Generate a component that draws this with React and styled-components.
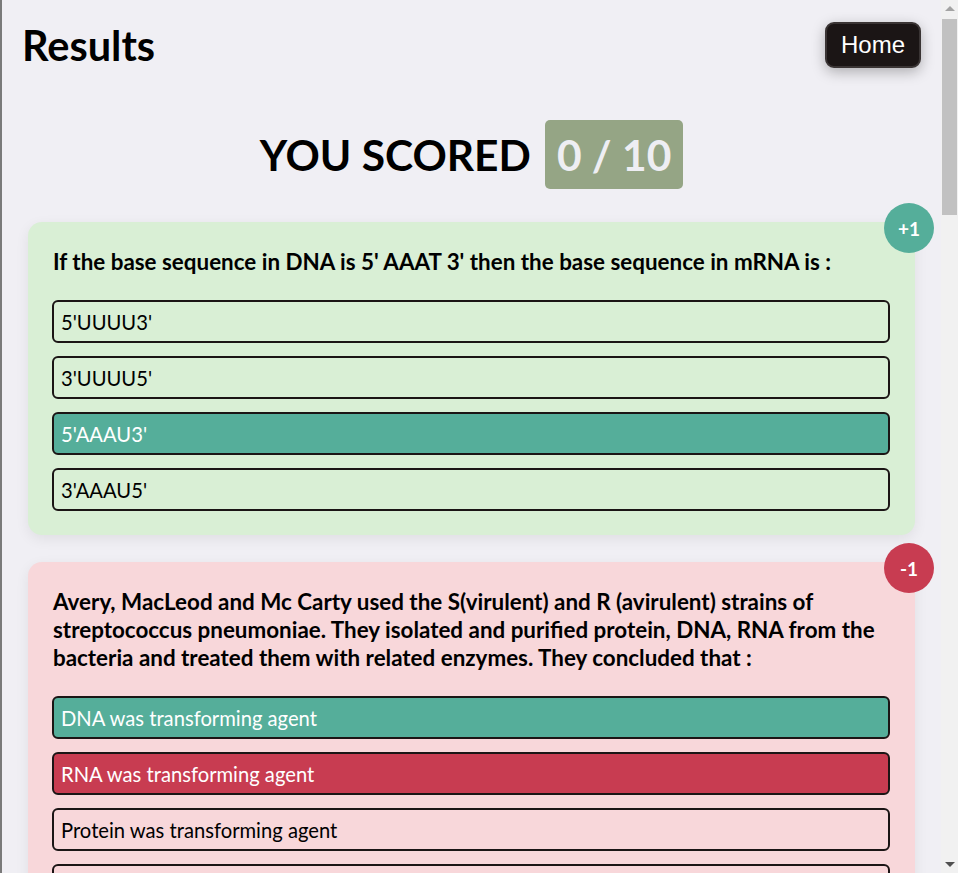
import React from "react";
import styled, { createGlobalStyle } from "styled-components";

const GlobalStyle = createGlobalStyle`
  html, body {
    margin: 0;
    padding: 0;
    background: #f0eff4;
  }
  body {
    font-family: Lato, "Noto Sans", sans-serif;
    color: #000;
    border-left: 2px solid #7a7a7a;
  }
  * { box-sizing: border-box; }
`;

const Page = styled.div`
  margin-right: 17px;
  padding: 20px 20px 40px 20px;
`;

const Scrollbar = styled.div`
  position: fixed;
  top: 0;
  right: 0;
  bottom: 0;
  width: 17px;
  background: #f1f1f1;
  display: flex;
  flex-direction: column;
  align-items: center;
`;

const Arrow = styled.div`
  width: 0;
  height: 0;
  margin: 6px 0;
  border-left: 5px solid transparent;
  border-right: 5px solid transparent;
  ${(p) =>
    p.$down
      ? "border-top: 5px solid #505050; margin-top: auto;"
      : "border-bottom: 5px solid #a3a3a3;"}
`;

const Thumb = styled.div`
  width: 15px;
  height: 196px;
  margin-top: 2px;
  background: #c1c1c1;
`;

const Header = styled.header`
  display: flex;
  align-items: center;
  justify-content: space-between;
`;

const Title = styled.h1`
  margin: 0;
  font-size: 41.5px;
  font-weight: 700;
  line-height: 50px;
`;

const HomeButton = styled.button`
  font-family: "Liberation Sans", Arial, sans-serif;
  font-size: 24px;
  color: #fff;
  background: #1b1515;
  border: 2px solid #3a3434;
  border-radius: 9px;
  padding: 7px 14px;
  box-shadow: 0 4px 14px rgba(0, 0, 0, 0.28);
  cursor: pointer;
`;

const ScoreRow = styled.div`
  display: flex;
  justify-content: center;
  align-items: center;
  gap: 14px;
  margin-top: 50px;
`;

const ScoreLabel = styled.span`
  font-size: 42.5px;
  font-weight: 700;
`;

const ScoreBox = styled.span`
  font-size: 42.5px;
  font-weight: 700;
  line-height: 53px;
  color: #eeeef3;
  background: #95a585;
  border-radius: 5px;
  padding: 8px 12px;
`;

const List = styled.div`
  display: flex;
  flex-direction: column;
  gap: 27px;
  margin: 33px 6px 0 6px;
`;

const Card = styled.section`
  position: relative;
  background: ${(p) => (p.$correct ? "#d9efd5" : "#f8d7da")};
  border-radius: 14px;
  padding: 26px 25px 24px 24px;
  box-shadow: 0 4px 14px rgba(0, 0, 0, 0.07);
`;

const Badge = styled.div`
  position: absolute;
  top: -19px;
  right: -19px;
  width: 50px;
  height: 50px;
  border-radius: 50%;
  display: flex;
  align-items: center;
  justify-content: center;
  background: ${(p) => (p.$correct ? "#55ae9a" : "#c83c51")};
  color: #fff;
  font-weight: 700;
  font-size: 19px;
`;

const Question = styled.p`
  margin: 0 0 24px 1px;
  font-size: 22.4px;
  font-weight: 700;
  line-height: 28px;
`;

const Options = styled.div`
  display: flex;
  flex-direction: column;
  gap: 13px;
`;

const optionBg = { correct: "#55ae9a", wrong: "#c83c51", none: "transparent" };

const Option = styled.div`
  height: 43px;
  display: flex;
  align-items: center;
  padding: 0 7px;
  border: 2px solid #1b1515;
  border-radius: 6px;
  font-size: 20.2px;
  background: ${(p) => optionBg[p.$state]};
  color: ${(p) => (p.$state === "none" ? "#000" : "#fff")};
`;

const questions = [
  {
    q: "If the base sequence in DNA is 5' AAAT 3' then the base sequence in mRNA is :",
    options: ["5'UUUU3'", "3'UUUU5'", "5'AAAU3'", "3'AAAU5'"],
    answer: 2,
    chosen: 2,
  },
  {
    q: "Avery, MacLeod and Mc Carty used the S(virulent) and R (avirulent) strains of streptococcus pneumoniae. They isolated and purified protein, DNA, RNA from the bacteria and treated them with related enzymes. They concluded that :",
    options: [
      "DNA was transforming agent",
      "RNA was transforming agent",
      "Protein was transforming agent",
      "All are correct",
    ],
    answer: 0,
    chosen: 1,
  },
  {
    q: "The process of copying genetic information from one strand of DNA into RNA is termed as :",
    options: ["Replication", "Transcription", "Translation", "Reverse transcription"],
    answer: 1,
    chosen: 0,
  },
  {
    q: "Which of the following is the initiator codon?",
    options: ["UAA", "UAG", "AUG", "UGA"],
    answer: 2,
    chosen: 0,
  },
  {
    q: "The unequivocal proof that DNA is the genetic material came from the experiments of :",
    options: ["Griffith", "Hershey and Chase", "Watson and Crick", "Meselson and Stahl"],
    answer: 1,
    chosen: 2,
  },
  {
    q: "Okazaki fragments are seen during :",
    options: ["Transcription", "Translation", "Replication", "Transduction"],
    answer: 2,
    chosen: 0,
  },
  {
    q: "The enzyme that joins the Okazaki fragments is :",
    options: ["DNA polymerase", "DNA ligase", "Helicase", "Primase"],
    answer: 1,
    chosen: 0,
  },
  {
    q: "The number of hydrogen bonds between guanine and cytosine is :",
    options: ["One", "Two", "Three", "Four"],
    answer: 2,
    chosen: 1,
  },
  {
    q: "Which RNA carries amino acids to the site of protein synthesis?",
    options: ["mRNA", "tRNA", "rRNA", "snRNA"],
    answer: 1,
    chosen: 0,
  },
  {
    q: "The lac operon consists of how many structural genes?",
    options: ["One", "Two", "Three", "Four"],
    answer: 2,
    chosen: 3,
  },
];

export default function App() {
  return (
    <>
      <GlobalStyle />
      <Page>
        <Header>
          <Title>Results</Title>
          <HomeButton>Home</HomeButton>
        </Header>
        <ScoreRow>
          <ScoreLabel>YOU SCORED</ScoreLabel>
          <ScoreBox>0 / 10</ScoreBox>
        </ScoreRow>
        <List>
          {questions.map((item, i) => {
            const correct = item.answer === item.chosen;
            return (
              <Card key={i} $correct={correct}>
                <Badge $correct={correct}>{correct ? "+1" : "-1"}</Badge>
                <Question>{item.q}</Question>
                <Options>
                  {item.options.map((o, j) => {
                    let state = "none";
                    if (j === item.answer) state = "correct";
                    else if (j === item.chosen) state = "wrong";
                    return (
                      <Option key={j} $state={state}>
                        {o}
                      </Option>
                    );
                  })}
                </Options>
              </Card>
            );
          })}
        </List>
      </Page>
      <Scrollbar aria-hidden="true">
        <Arrow />
        <Thumb />
        <Arrow $down />
      </Scrollbar>
    </>
  );
}
